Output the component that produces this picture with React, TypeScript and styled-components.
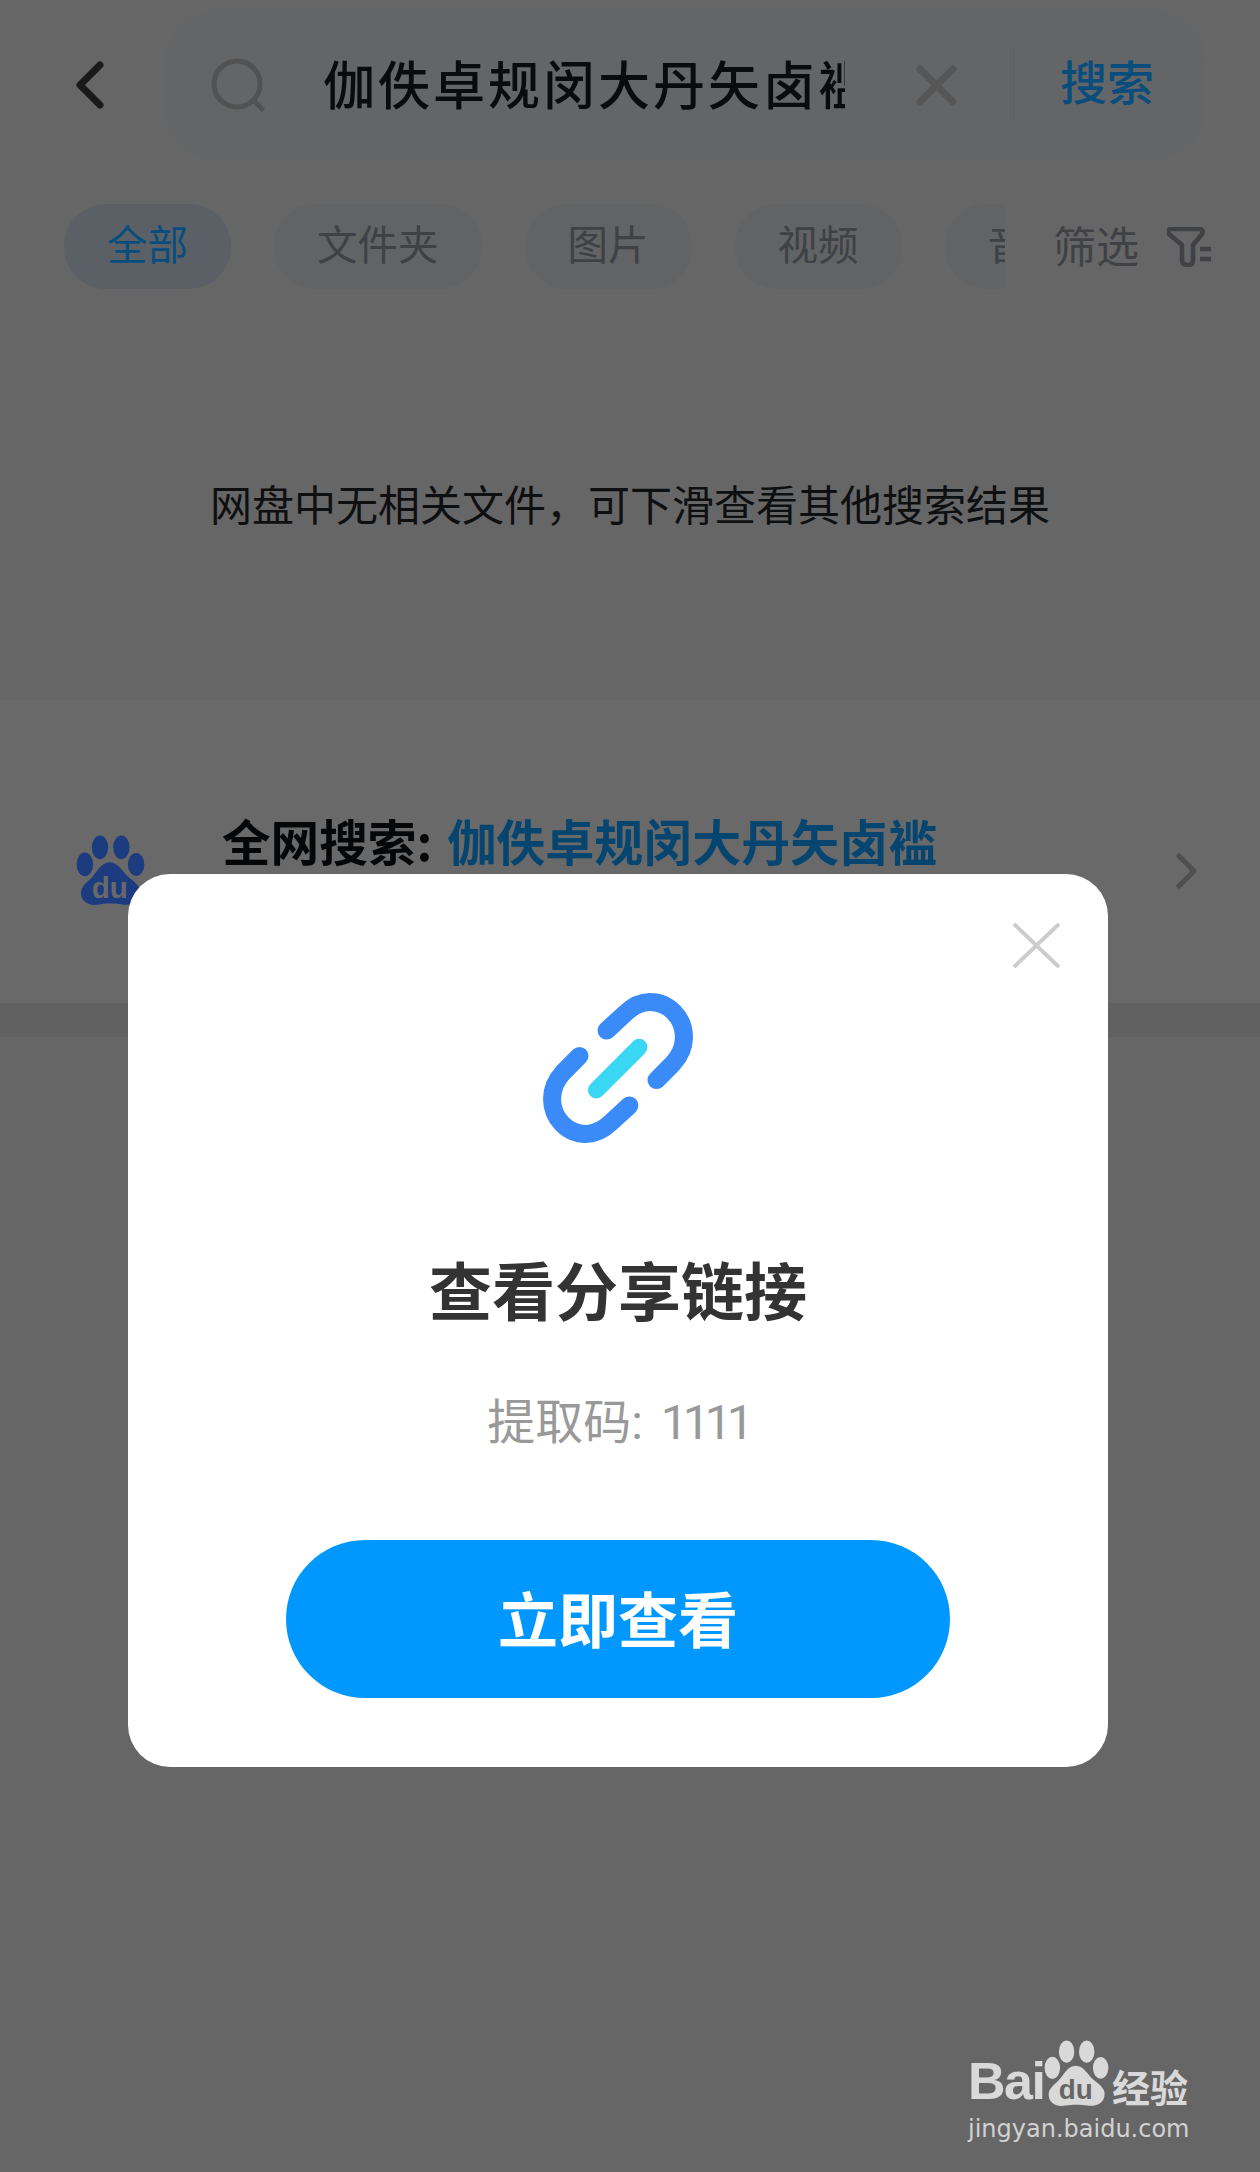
import styled, { createGlobalStyle } from 'styled-components'

const GlobalStyle = createGlobalStyle`
    html, body {
        margin: 0;
        padding: 0;
        background: #666666;
    }
    * {
        box-sizing: border-box;
    }
`

const Page = styled.div`
    position: relative;
    width: 1260px;
    height: 2172px;
    overflow: hidden;
    background: #666666;
    font-family: "Noto Sans CJK SC", "Noto Sans", sans-serif;
`

const Header = styled.header`
    display: flex;
    align-items: center;
    height: 150px;
    margin-top: 10px;
    padding-left: 75px;
`

const BackButton = styled.div`
    display: flex;
    align-items: center;
    width: 90px;
`

const SearchBar = styled.div`
    display: flex;
    align-items: center;
    width: 1040px;
    height: 150px;
    padding-left: 46px;
    border-radius: 52px;
    background: #646566;
`

const Query = styled.div`
    width: 522px;
    margin-left: 58px;
    margin-bottom: 5px;
    overflow: hidden;
    white-space: nowrap;
    font-size: 52px;
    font-weight: 500;
    letter-spacing: 3px;
    line-height: 66px;
    color: #0a0b0d;
`

const ClearIcon = styled.svg`
    margin-left: 71px;
    flex-shrink: 0;
`

const Divider = styled.div`
    width: 1px;
    height: 72px;
    margin-left: 56px;
    background: #5d5e5f;
`

const SearchLink = styled.div`
    margin-left: 46px;
    margin-bottom: 10px;
    font-size: 47px;
    font-weight: 500;
    line-height: 60px;
    color: #094d7d;
`

const FilterRow = styled.nav`
    display: flex;
    align-items: center;
    height: 85px;
    margin-top: 44px;
    padding-left: 64px;
`

const ChipScroller = styled.div`
    display: flex;
    gap: 43px;
    width: 941px;
    overflow: hidden;
    flex-shrink: 0;
`

const Chip = styled.div<{ $active?: boolean }>`
    flex-shrink: 0;
    height: 85px;
    padding: 0 43px;
    border-radius: 42px;
    font-size: 40.5px;
    line-height: 78px;
    background: ${(p) => (p.$active ? '#5a6066' : '#626364')};
    color: ${(p) => (p.$active ? '#094d7d' : '#3f4144')};
`

const FilterButton = styled.div`
    display: flex;
    align-items: center;
    gap: 28px;
    margin-left: 48px;
    font-size: 43px;
    color: #3f4144;
`

const FilterLabel = styled.span`
    margin-bottom: 6px;
    line-height: 78px;
`

const EmptyMessage = styled.div`
    display: flex;
    align-items: center;
    justify-content: center;
    height: 411px;
    padding-top: 16px;
    font-size: 42px;
    color: #0e0f11;
`

const WebSearchBand = styled.section`
    display: flex;
    align-items: center;
    height: 303px;
    padding: 38px 62px 0 76px;
    background: #696969;
`

const WebSearchTitle = styled.div`
    align-self: flex-start;
    margin: 72px 0 0 77px;
    font-size: 48.6px;
    font-weight: 700;
    line-height: 60px;
    color: #050608;
    flex: 1;
`

const Keyword = styled.span`
    margin-left: 4px;
    font-size: 49px;
    color: #06456f;
`

const BandSeparator = styled.div`
    height: 34px;
    background: #616161;
`

const Modal = styled.div`
    position: absolute;
    left: 128px;
    top: 874px;
    display: flex;
    flex-direction: column;
    align-items: center;
    width: 980px;
    height: 893px;
    padding-top: 119px;
    border-radius: 42px;
    background: #ffffff;
`

const CloseIcon = styled.svg`
    position: absolute;
    top: 49px;
    right: 48px;
`

const ModalTitle = styled.h2`
    margin: 95px 0 0;
    font-size: 63px;
    font-weight: 700;
    line-height: 100px;
    color: #333333;
`

const ExtractCode = styled.p`
    margin: 52px 0 0;
    font-family: Roboto, "Noto Sans CJK SC", sans-serif;
    font-size: 48px;
    line-height: 66px;
    color: #999999;
`

const CodeDigits = styled.span`
    margin-left: 6px;
    letter-spacing: -5px;
`

const ViewButton = styled.button`
    width: 664px;
    height: 158px;
    margin-top: 84px;
    padding: 0 0 6px;
    border: 0;
    border-radius: 79px;
    background: #0098ff;
    font-family: inherit;
    font-size: 60px;
    font-weight: 700;
    color: #ffffff;
`

const Watermark = styled.div`
    position: absolute;
    left: 968px;
    top: 2037px;
    width: 224px;
    color: #d9d9d9;
`

const WatermarkLogo = styled.div`
    display: flex;
    align-items: flex-end;
    height: 72px;
`

const WatermarkBai = styled.span`
    width: 76px;
    font-family: "Liberation Sans", sans-serif;
    font-size: 52px;
    font-weight: 700;
    line-height: 56px;
    letter-spacing: -1.5px;
`

const WatermarkJingyan = styled.span`
    margin-left: 3px;
    font-size: 38px;
    font-weight: 700;
    line-height: 46px;
    white-space: nowrap;
`

const WatermarkUrl = styled.div`
    margin-top: 6px;
    font-family: "DejaVu Sans", sans-serif;
    font-size: 24px;
    line-height: 28px;
    white-space: nowrap;
    color: #d2d2d2;
`

function PawLogo({ width, height, fill, cut }: { width: number; height: number; fill: string; cut: string }) {
    return (
        <svg width={width} height={height} viewBox="105 103 210 218" style={{ flexShrink: 0 }}>
            <ellipse cx="178" cy="140" rx="25" ry="36" fill={fill} />
            <ellipse cx="243" cy="140" rx="25" ry="36" fill={fill} />
            <ellipse cx="132" cy="192" rx="25" ry="36" fill={fill} />
            <ellipse cx="288" cy="192" rx="25" ry="35" fill={fill} />
            <path
                d="M208 185 C235 185 245 215 270 235 C290 250 305 265 300 285 C295 310 270 318 245 314 C225 310 195 310 175 314 C145 320 120 305 120 280 C120 260 135 250 150 235 C170 215 180 185 208 185 Z"
                fill={fill}
            />
            <text
                x="208"
                y="293"
                textAnchor="middle"
                fontFamily="Liberation Sans, sans-serif"
                fontWeight="700"
                fontSize="90"
                fill={cut}
            >
                du
            </text>
        </svg>
    )
}

function LinkIcon() {
    return (
        <svg width="150" height="150" viewBox="128 100 448 448" fill="none" strokeLinecap="round">
            <path
                d="M318 212 L372 162 C395 140 420 127 447 127 C505 127 549 175 549 232 C549 262 535 290 515 312 L467 360"
                stroke="#3a8bf8"
                strokeWidth="54"
            />
            <path
                d="M386 436 L332 486 C309 508 284 521 257 521 C199 521 155 473 155 416 C155 386 169 358 189 336 L237 288"
                stroke="#3a8bf8"
                strokeWidth="54"
            />
            <path d="M287 390 L415 262" stroke="#3ad7f5" strokeWidth="50" />
        </svg>
    )
}

function App() {
    const chips = ['文件夹', '图片', '视频', '音频']

    return (
        <Page>
            <GlobalStyle />
            <Header>
                <BackButton>
                    <svg width="30" height="48" viewBox="0 0 30 48" fill="none">
                        <path d="M25 4 L5 24 L25 44" stroke="#1a1a1a" strokeWidth="7" strokeLinecap="round" strokeLinejoin="round" />
                    </svg>
                </BackButton>
                <SearchBar>
                    <svg width="54" height="54" viewBox="0 0 54 54" fill="none">
                        <circle cx="26" cy="26" r="23" stroke="#525252" strokeWidth="5" />
                        <path d="M43 43 L51 51" stroke="#525252" strokeWidth="5" strokeLinecap="round" />
                    </svg>
                    <Query>伽佚卓规闵大丹矢卤褴</Query>
                    <ClearIcon width="41" height="41" viewBox="0 0 41 41" fill="none">
                        <path d="M4 4 L37 37 M37 4 L4 37" stroke="#565656" strokeWidth="7" strokeLinecap="round" />
                    </ClearIcon>
                    <Divider />
                    <SearchLink>搜索</SearchLink>
                </SearchBar>
            </Header>
            <FilterRow>
                <ChipScroller>
                    <Chip $active>全部</Chip>
                    {chips.map((chip) => (
                        <Chip key={chip}>{chip}</Chip>
                    ))}
                </ChipScroller>
                <FilterButton>
                    <FilterLabel>筛选</FilterLabel>
                    <svg width="44" height="40" viewBox="0 0 44 40" fill="none">
                        <path
                            d="M4 2 H32 Q37 2 35 7 L26 18 V33 Q26 38 21 38 Q15 38 15 33 V18 L2 7 Q0 2 4 2 Z"
                            stroke="#3f4144"
                            strokeWidth="4.5"
                            strokeLinejoin="round"
                        />
                        <path d="M33 22 H44 M33 32 H44" stroke="#3f4144" strokeWidth="4.5" />
                    </svg>
                </FilterButton>
            </FilterRow>
            <EmptyMessage>网盘中无相关文件，可下滑查看其他搜索结果</EmptyMessage>
            <WebSearchBand>
                <PawLogo width={69} height={72} fill="#1d3c80" cut="#696969" />
                <WebSearchTitle>
                    全网搜索: <Keyword>伽佚卓规闵大丹矢卤褴</Keyword>
                </WebSearchTitle>
                <svg width="22" height="36" viewBox="0 0 22 36" fill="none">
                    <path d="M3 3 L18 18 L3 33" stroke="#4f4f4f" strokeWidth="5" strokeLinecap="round" strokeLinejoin="round" />
                </svg>
            </WebSearchBand>
            <BandSeparator />
            <Modal>
                <CloseIcon width="47" height="45" viewBox="0 0 47 45" fill="none">
                    <path d="M1 1 L46 44 M46 1 L1 44" stroke="#cccccc" strokeWidth="4" />
                </CloseIcon>
                <LinkIcon />
                <ModalTitle>查看分享链接</ModalTitle>
                <ExtractCode>
                    提取码: <CodeDigits>1111</CodeDigits>
                </ExtractCode>
                <ViewButton>立即查看</ViewButton>
            </Modal>
            <Watermark>
                <WatermarkLogo>
                    <WatermarkBai>Bai</WatermarkBai>
                    <PawLogo width={65} height={70} fill="#d9d9d9" cut="#666666" />
                    <WatermarkJingyan>经验</WatermarkJingyan>
                </WatermarkLogo>
                <WatermarkUrl>jingyan.baidu.com</WatermarkUrl>
            </Watermark>
        </Page>
    )
}

export default App
